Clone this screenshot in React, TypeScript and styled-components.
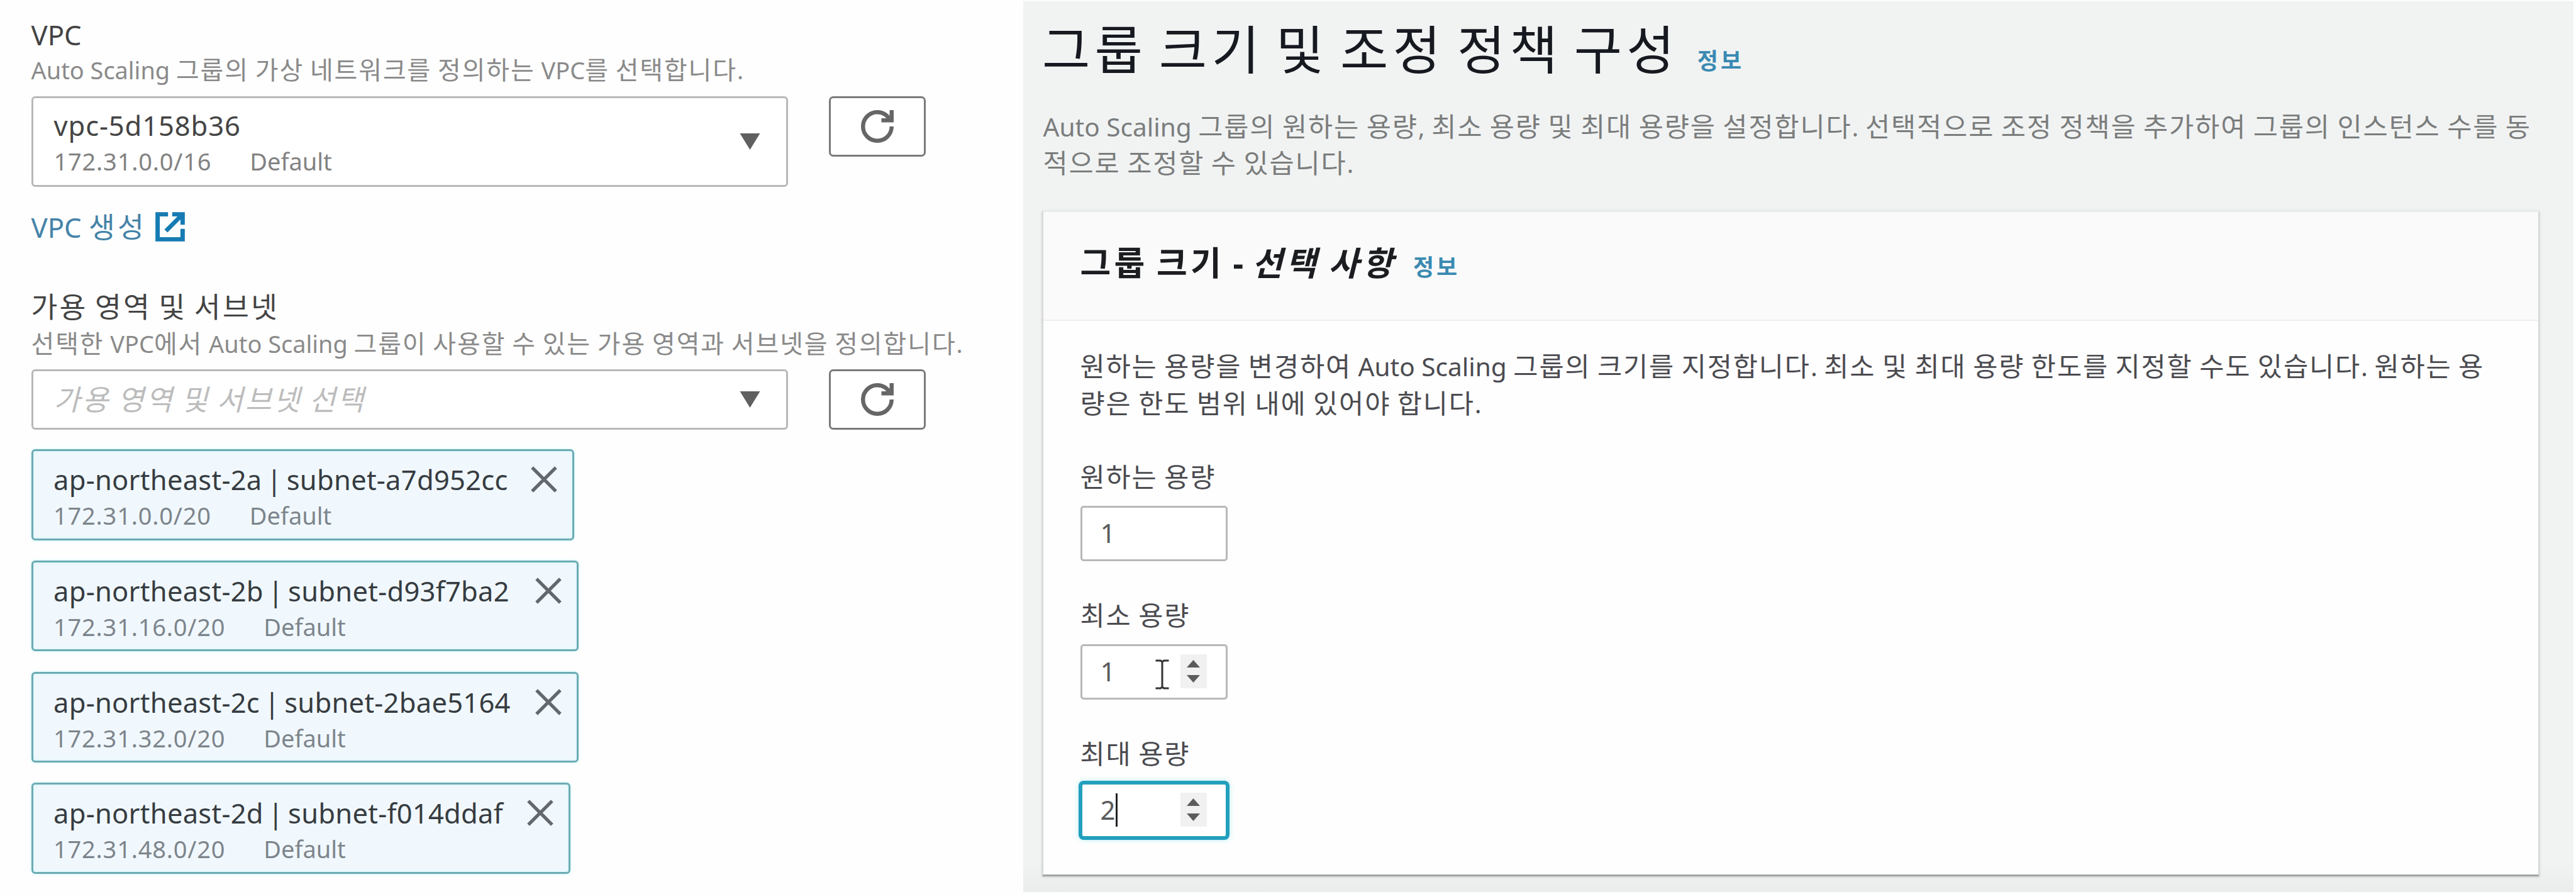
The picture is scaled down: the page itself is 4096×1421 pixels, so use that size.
import React from "react";
import styled, { createGlobalStyle, css } from "styled-components";

const GlobalStyle = createGlobalStyle`
  * { box-sizing: border-box; }
  body { margin: 0; background: #fff; }
`;

const Screen = styled.main`
  display: grid;
  grid-template-columns: 1627px 2465px;
  width: 4096px;
  height: 1421px;
  overflow: hidden;
  background: #fefefe;
  font-family: "Noto Sans", "Noto Sans CJK KR", sans-serif;
  color: #3c3c3c;
`;

/* ---------- text ---------- */

type Tone = "label" | "hint" | "intro" | "body" | "title" | "cardTitle" | "info" | "placeholder" | "link";

const tones: Record<Tone, ReturnType<typeof css>> = {
  label: css`font-size: 43.6px; line-height: 60px; color: #444;`,
  hint: css`font-size: 37.9px; line-height: 52px; color: #8a8a8a;`,
  intro: css`font-size: 40.6px; line-height: 58.7px; color: #7b7d7d;`,
  body: css`font-size: 40.6px; line-height: 58.7px; color: #4b4b50;`,
  title: css`font-size: 72px; line-height: 100px; color: #16191f;`,
  cardTitle: css`font-size: 52px; line-height: 80px; font-weight: 700; color: #1b1d20;`,
  info: css`font-size: 36px; line-height: 50px; font-weight: 700; color: #3a8ab2;`,
  placeholder: css`font-size: 43.6px; line-height: 60px; font-style: italic; color: #bcbcbc;`,
  link: css`font-size: 43.6px; line-height: 60px; color: #4583a8;`,
};

const hangul: Record<Tone, [size: number, spacing: number]> = {
  label: [45.5, 3.2],
  hint: [40, 1.85],
  intro: [42.6, 1.85],
  body: [42.6, 1.85],
  title: [83, 7.2],
  cardTitle: [53, 5.2],
  info: [36, 4],
  placeholder: [45.5, 3.2],
  link: [45.5, 4.2],
};

const Line = styled.div<{ $tone: Tone }>`
  white-space: pre;
  ${(p) => tones[p.$tone]}
`;

const Hangul = styled.span<{ $tone: Tone }>`
  font-family: "Noto Sans CJK KR", sans-serif;
  font-size: ${(p) => hangul[p.$tone][0]}px;
  letter-spacing: ${(p) => hangul[p.$tone][1]}px;
  line-height: 0;
`;

const Slanted = styled.em`
  font-style: italic;
`;

function Mixed({ tone, children }: { tone: Tone; children: string }) {
  return (
    <>
      {children.split(/([\uac00-\ud7a3]+)/).map((run, i) =>
        i % 2 ? <Hangul key={i} $tone={tone}>{run}</Hangul> : run
      )}
    </>
  );
}

function Text({ tone, children }: { tone: Tone; children: string }) {
  return <Line $tone={tone}><Mixed tone={tone}>{children}</Mixed></Line>;
}

/* ---------- left column ---------- */

const NetworkColumn = styled.section`
  display: flex;
  flex-direction: column;
  align-items: flex-start;
  padding: 25px 0 0 49.5px;
`;

const ControlRow = styled.div<{ $top: number }>`
  display: flex;
  align-items: flex-start;
  gap: 65px;
  margin-top: ${(p) => p.$top}px;
`;

const SelectBox = styled.div<{ $height: number }>`
  display: flex;
  align-items: center;
  justify-content: space-between;
  width: 1203px;
  height: ${(p) => p.$height}px;
  padding: 1px 41px 0 33px;
  border: 3px solid #b8b8b8;
  border-radius: 6px;
  background: #fff;
`;

const OptionName = styled.div<{ $wide?: boolean; $dark?: boolean }>`
  font-size: 43.5px;
  line-height: 60px;
  letter-spacing: ${(p) => (p.$wide ? 0.9 : 0.25)}px;
  word-spacing: -4px;
  color: ${(p) => (p.$dark ? "#363c41" : "#444")};
  white-space: pre;
`;

const OptionMeta = styled.div<{ $cool?: boolean }>`
  display: flex;
  gap: 61px;
  padding-top: 1px;
  font-size: 38px;
  line-height: 52px;
  color: ${(p) => (p.$cool ? "#7d858c" : "#828282")};
`;

const Cidr = styled.span`
  letter-spacing: 0.8px;
`;

const RefreshButton = styled.button`
  display: flex;
  align-items: center;
  justify-content: center;
  width: 154px;
  height: 96px;
  padding: 0;
  border: 3px solid #7a7a7a;
  border-radius: 7px;
  background: #fff;
`;

const CreateLink = styled.a`
  display: flex;
  align-items: center;
  gap: 11px;
  margin-top: 34px;
`;

const Heading = styled.div`
  margin-top: 67.5px;
  margin-bottom: 1.5px;
`;

const TokenList = styled.div`
  display: flex;
  flex-direction: column;
  gap: 32.3px;
  margin-top: 31.5px;
`;

const Token = styled.div<{ $width: number }>`
  display: flex;
  justify-content: space-between;
  width: ${(p) => p.$width}px;
  height: 144.5px;
  padding: 15px 24px 0 32.5px;
  border: 3px solid #6cabb3;
  border-radius: 6px;
  background: #f1f8fd;
  box-shadow: 0 0 4px #c3f3f6, inset 0 0 6px #d4f7fb;
`;

const CloseButton = styled.button`
  display: flex;
  height: 42px;
  margin-top: 9px;
  padding: 0;
  border: 0;
  background: none;
`;

/* ---------- right column ---------- */

const SizePanel = styled.section`
  display: flex;
  flex-direction: column;
  margin: 2px 0 3px;
  padding: 30px 0 0 30px;
  background: linear-gradient(#f1f3f3 0, #f1f3f3 1370px, #ebecec 100%);
`;

const PageTitle = styled.header<{ $gap: number }>`
  display: flex;
  align-items: baseline;
  gap: ${(p) => p.$gap}px;
`;

const Intro = styled.div`
  margin: 40.5px 0 45px 1.5px;
`;

const Card = styled.div`
  width: 2381px;
  height: 1058px;
  border: 2px solid #d5d7d7;
  border-top-color: #ebebeb;
  border-bottom: 3px solid #a2a5a5;
  background: #fefefe;
  box-shadow: 0 1px 4px rgba(0, 10, 10, 0.15);
`;

const CardHeader = styled.div`
  height: 173px;
  padding: 41px 0 0 58.5px;
  border-bottom: 2px solid #eeefef;
  background: #fafafa;
`;

const CardBody = styled.div`
  padding: 44.5px 0 0 58.5px;
`;

const Field = styled.div<{ $top: number }>`
  display: flex;
  flex-direction: column;
  gap: 15px;
  margin-top: ${(p) => p.$top}px;
`;

const NumberBox = styled.div<{ $focused?: boolean }>`
  position: relative;
  display: flex;
  align-items: center;
  width: 234px;
  height: 88px;
  padding: 0 30px 1px 29px;
  border: 3px solid ${(p) => (p.$focused ? "#22a0bd" : "#b8b8b8")};
  border-radius: 5px;
  background: #fff;
  box-shadow: ${(p) => (p.$focused ? "0 0 0 3px #22a0bd, 0 0 8px 3px #b9eef5" : "none")};
  font-size: 42px;
  line-height: 60px;
  color: #5a5a5a;
`;

const Caret = styled.span`
  width: 3px;
  height: 53px;
  background: #222;
`;

const Spinner = styled.span`
  display: flex;
  flex-direction: column;
  align-items: center;
  justify-content: center;
  gap: 12px;
  width: 42px;
  height: 54px;
  margin-left: auto;
  background: #f1f1f1;
`;

const Pointer = styled.svg`
  position: absolute;
  left: 116px;
  top: 21px;
`;

/* ---------- icons ---------- */

const DropArrow = () => (
  <svg width="33" height="26" viewBox="0 0 33 26"><path d="M0.5 0H32.5L16.5 26Z" fill="#606060" /></svg>
);

const RefreshIcon = () => (
  <svg width="52" height="52" viewBox="0 0 16 16" fill="none" stroke="#666" strokeWidth="2">
    <path d="M10 5h5V0" />
    <path d="M15 8a6.957 6.957 0 0 1-7 7 6.957 6.957 0 0 1-7-7 6.957 6.957 0 0 1 7-7 6.87 6.87 0 0 1 6.3 4" />
  </svg>
);

const ExternalIcon = () => (
  <svg width="53" height="53" viewBox="0 0 16 16" fill="none" stroke="#167bb3" strokeWidth="2.1">
    <path d="M9 2h5v5" />
    <path d="M6 10l8-8" />
    <path d="M14 9v5H2V2h5" />
  </svg>
);

const CloseIcon = () => (
  <svg width="42" height="42" viewBox="0 0 14 14" fill="none" stroke="#62686d" strokeWidth="1.8">
    <path d="M.7.7l12.6 12.6M13.3.7L.7 13.3" />
  </svg>
);

const StepArrow = ({ down }: { down?: boolean }) => (
  <svg width="21" height="12" viewBox="0 0 21 12">
    <path d={down ? "M0 0H21L10.5 12Z" : "M0 12H21L10.5 0Z"} fill="#5c5c5c" />
  </svg>
);

const TextPointer = () => (
  <Pointer width="22" height="48" viewBox="0 0 22 48" fill="none" stroke="#333" strokeWidth="3">
    <path d="M0.5 2H8.500L11 4L13.500 2H21.500M11 4V44M0.5 46H8.500L11 44L13.500 46H21.500" />
  </Pointer>
);

/* ---------- data ---------- */

const subnets = [
  { name: "ap-northeast-2a | subnet-a7d952cc", cidr: "172.31.0.0/20", width: 863 },
  { name: "ap-northeast-2b | subnet-d93f7ba2", cidr: "172.31.16.0/20", width: 870 },
  { name: "ap-northeast-2c | subnet-2bae5164", cidr: "172.31.32.0/20", width: 870 },
  { name: "ap-northeast-2d | subnet-f014ddaf", cidr: "172.31.48.0/20", width: 857 },
];

const Steps = () => (
  <Spinner><StepArrow /><StepArrow down /></Spinner>
);

export default function App() {
  return (
    <>
      <GlobalStyle />
      <Screen>
        <NetworkColumn>
          <Text tone="label">VPC</Text>
          <Text tone="hint">Auto Scaling 그룹의 가상 네트워크를 정의하는 VPC를 선택합니다.</Text>
          <ControlRow $top={15.5}>
            <SelectBox $height={144}>
              <div>
                <OptionName $wide>vpc-5d158b36</OptionName>
                <OptionMeta><Cidr>172.31.0.0/16</Cidr><span>Default</span></OptionMeta>
              </div>
              <DropArrow />
            </SelectBox>
            <RefreshButton><RefreshIcon /></RefreshButton>
          </ControlRow>
          <CreateLink>
            <Text tone="link">VPC 생성</Text>
            <ExternalIcon />
          </CreateLink>
          <Heading>
            <Text tone="label">가용 영역 및 서브넷</Text>
          </Heading>
          <Text tone="hint">선택한 VPC에서 Auto Scaling 그룹이 사용할 수 있는 가용 영역과 서브넷을 정의합니다.</Text>
          <ControlRow $top={15}>
            <SelectBox $height={96}>
              <Text tone="placeholder">가용 영역 및 서브넷 선택</Text>
              <DropArrow />
            </SelectBox>
            <RefreshButton><RefreshIcon /></RefreshButton>
          </ControlRow>
          <TokenList>
            {subnets.map((s) => (
              <Token key={s.name} $width={s.width}>
                <div>
                  <OptionName $dark>{s.name}</OptionName>
                  <OptionMeta $cool><Cidr>{s.cidr}</Cidr><span>Default</span></OptionMeta>
                </div>
                <CloseButton><CloseIcon /></CloseButton>
              </Token>
            ))}
          </TokenList>
        </NetworkColumn>

        <SizePanel>
          <PageTitle $gap={29}>
            <Text tone="title">그룹 크기 및 조정 정책 구성</Text>
            <Text tone="info">정보</Text>
          </PageTitle>
          <Intro>
            <Text tone="intro">Auto Scaling 그룹의 원하는 용량, 최소 용량 및 최대 용량을 설정합니다. 선택적으로 조정 정책을 추가하여 그룹의 인스턴스 수를 동</Text>
            <Text tone="intro">적으로 조정할 수 있습니다.</Text>
          </Intro>
          <Card>
            <CardHeader>
              <PageTitle $gap={27}>
                <Line $tone="cardTitle">
                  <Mixed tone="cardTitle">그룹 크기 - </Mixed>
                  <Slanted><Mixed tone="cardTitle">선택 사항</Mixed></Slanted>
                </Line>
                <Text tone="info">정보</Text>
              </PageTitle>
            </CardHeader>
            <CardBody>
              <Text tone="body">원하는 용량을 변경하여 Auto Scaling 그룹의 크기를 지정합니다. 최소 및 최대 용량 한도를 지정할 수도 있습니다. 원하는 용</Text>
              <Text tone="body">량은 한도 범위 내에 있어야 합니다.</Text>
              <Field $top={58}>
                <Text tone="body">원하는 용량</Text>
                <NumberBox>1</NumberBox>
              </Field>
              <Field $top={58.5}>
                <Text tone="body">최소 용량</Text>
                <NumberBox>1<TextPointer /><Steps /></NumberBox>
              </Field>
              <Field $top={58.5}>
                <Text tone="body">최대 용량</Text>
                <NumberBox $focused>2<Caret /><Steps /></NumberBox>
              </Field>
            </CardBody>
          </Card>
        </SizePanel>
      </Screen>
    </>
  );
}
